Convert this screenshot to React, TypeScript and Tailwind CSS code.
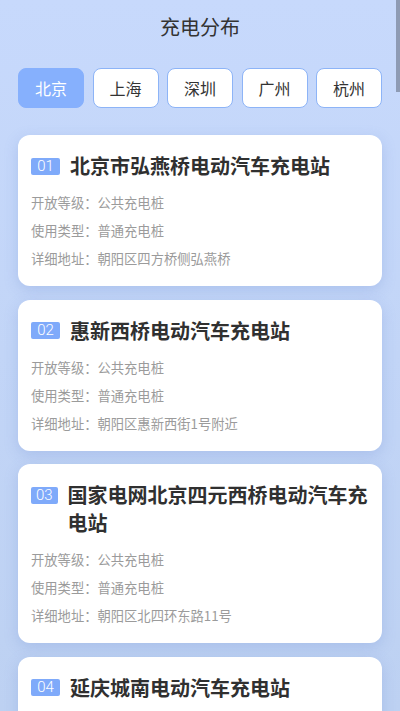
import { useState } from "react";

interface Station {
  no: string;
  name: string;
  level: string;
  type: string;
  address: string;
}

const cities = ["北京", "上海", "深圳", "广州", "杭州"];

const stations: Station[] = [
  { no: "01", name: "北京市弘燕桥电动汽车充电站", level: "公共充电桩", type: "普通充电桩", address: "朝阳区四方桥侧弘燕桥" },
  { no: "02", name: "惠新西桥电动汽车充电站", level: "公共充电桩", type: "普通充电桩", address: "朝阳区惠新西街1号附近" },
  { no: "03", name: "国家电网北京四元西桥电动汽车充电站", level: "公共充电桩", type: "普通充电桩", address: "朝阳区北四环东路11号" },
  { no: "04", name: "延庆城南电动汽车充电站", level: "公共充电桩", type: "普通充电桩", address: "延庆区城南街道" },
];

function StationCard({ station }: { station: Station }) {
  return (
    <div className="rounded-[12px] bg-white pl-[13px] pr-[13px] pt-[17px] pb-[13px] shadow-[0_4px_14px_rgba(110,140,210,0.28)]">
      <div className="flex items-start">
        <span className="mt-[5.5px] flex h-[17px] w-[29px] items-center justify-center overflow-hidden rounded-[2px] bg-[#7faafa] px-[4px] text-[15px] leading-none text-white font-['Roboto','Noto_Sans',sans-serif] font-light">
          {station.no}
        </span>
        <h2 className="ml-[10px] text-[20px] leading-[28px] font-bold text-[#303030]">
          {station.name}
        </h2>
      </div>
      <div className="mt-[9px] text-[13.3px] leading-[28px] text-[#9b9b9b]">
        <p>开放等级：{station.level}</p>
        <p>使用类型：{station.type}</p>
        <p>详细地址：{station.address}</p>
      </div>
    </div>
  );
}

export default function App() {
  const [active, setActive] = useState(0);

  return (
    <div className="relative h-[711px] overflow-hidden bg-gradient-to-b from-[#c7d9fc] to-[#bdd1f2] font-['Noto_Sans_CJK_SC','Noto_Sans',sans-serif]">
      <div className="absolute right-0 top-0 h-[92px] w-[4px] bg-[#8e9bb4]" />
      <header className="flex h-[54px] items-center justify-center text-[20px] text-[#333]">
        充电分布
      </header>
      <div className="mt-[14px] flex justify-between px-[18px]">
        {cities.map((city, i) => (
          <button
            key={city}
            onClick={() => setActive(i)}
            className={
              i === active
                ? "flex h-[40px] w-[66px] items-center justify-center rounded-[8px] border border-[#86b0fd] bg-[#86b0fd] text-[16px] text-white"
                : "flex h-[40px] w-[66px] items-center justify-center rounded-[8px] border border-[#8db4f7] bg-white text-[16px] text-[#333]"
            }
          >
            {city}
          </button>
        ))}
      </div>
      <div className="mt-[27px] flex flex-col gap-[13.5px] px-[18px]">
        {stations.map((s) => (
          <StationCard key={s.no} station={s} />
        ))}
      </div>
    </div>
  );
}
